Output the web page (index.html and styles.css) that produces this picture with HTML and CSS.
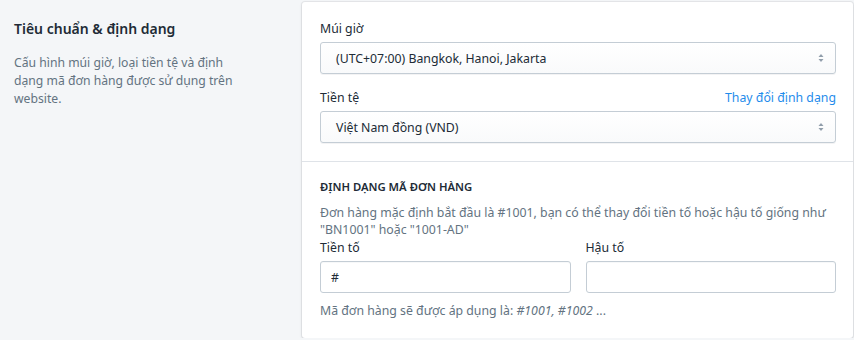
FILE: index.html
```html
<!DOCTYPE html>
<html lang="vi">

<head>
    <meta charset="UTF-8">
    <meta name="viewport" content="width=device-width, initial-scale=1.0">
    <title>Tiêu chuẩn & định dạng</title>
    <link rel="stylesheet" href="styles.css">
</head>

<body>

    <div class="layout">
        <!-- Mô tả bên trái -->
        <div class="annotation">
            <h2 class="annotation-title">Tiêu chuẩn &amp; định dạng</h2>
            <p class="annotation-text">Cấu hình múi giờ, loại tiền tệ và định dạng mã đơn hàng được sử dụng trên website.</p>
        </div>

        <!-- Card -->
        <div class="card">
            <div class="card-section">
                <div class="field">
                    <div class="field-label">
                        <label>Múi giờ</label>
                    </div>
                    <div class="select">
                        <span>(UTC+07:00) Bangkok, Hanoi, Jakarta</span>
                        <svg class="select-arrows" width="8" height="12" viewBox="0 0 8 12">
                            <path d="M4 2 L6.5 5 H1.5 Z" fill="#919eab" />
                            <path d="M4 10 L6.5 7 H1.5 Z" fill="#919eab" />
                        </svg>
                    </div>
                </div>

                <div class="field">
                    <div class="field-label">
                        <label>Tiền tệ</label>
                        <a href="#" class="link">Thay đổi định dạng</a>
                    </div>
                    <div class="select">
                        <span>Việt Nam đồng (VND)</span>
                        <svg class="select-arrows" width="8" height="12" viewBox="0 0 8 12">
                            <path d="M4 2 L6.5 5 H1.5 Z" fill="#919eab" />
                            <path d="M4 10 L6.5 7 H1.5 Z" fill="#919eab" />
                        </svg>
                    </div>
                </div>
            </div>

            <div class="card-section section-bottom">
                <h3 class="subheading">ĐỊNH DẠNG MÃ ĐƠN HÀNG</h3>
                <p class="help">Đơn hàng mặc định bắt đầu là #1001, bạn có thể thay đổi tiền tố hoặc hậu tố giống như "BN1001" hoặc "1001-AD"</p>

                <div class="field-group">
                    <div class="field">
                        <div class="field-label"><label>Tiền tố</label></div>
                        <input type="text" class="input" value="#">
                    </div>
                    <div class="field">
                        <div class="field-label"><label>Hậu tố</label></div>
                        <input type="text" class="input" value="">
                    </div>
                </div>

                <p class="preview">Mã đơn hàng sẽ được áp dụng là: <em>#1001, #1002</em> ...</p>
            </div>
        </div>
    </div>

</body>

</html>
```

FILE: styles.css
```css
/* Style général */
body {
    margin: 0;
    font-family: "Noto Sans", "Open Sans", sans-serif;
    font-size: 12.3px;
    color: #212b36;
    background-color: #f4f6f8;
}

.layout {
    display: flex;
    align-items: flex-start;
    padding-top: 2px;
}

/* Colonne gauche */
.annotation {
    width: 302px;
    padding: 17px 0 0 14px;
    box-sizing: border-box;
    flex-shrink: 0;
}

.annotation-title {
    margin: 0;
    font-size: 14px;
    font-weight: 600;
    line-height: 20px;
}

.annotation-text {
    margin: 15px 0 0;
    width: 230px;
    font-size: 12.2px;
    line-height: 18px;
    color: #637381;
}

/* Card */
.card {
    width: 551px;
    height: 336px;
    box-sizing: border-box;
    background-color: white;
    border-radius: 3px;
    box-shadow: 0 0 0 1px rgba(63, 63, 68, 0.07), 0 1px 3px 0 rgba(63, 63, 68, 0.15);
}

.card-section {
    padding: 19px 17px 18px 18px;
}

.section-bottom {
    border-top: 1px solid #dfe3e8;
    padding-top: 17px;
}

.field + .field {
    margin-top: 16px;
}

.field-label {
    display: flex;
    justify-content: space-between;
    line-height: 16px;
    margin-bottom: 5px;
}

.link {
    color: #1f8ceb;
    text-decoration: none;
}

/* Select */
.select {
    height: 32px;
    box-sizing: border-box;
    border: 1px solid #c4cdd5;
    border-radius: 3px;
    background: linear-gradient(to bottom, #ffffff, #f9fafb);
    box-shadow: 0 1px 0 0 rgba(22, 29, 37, 0.05);
    display: flex;
    align-items: center;
    justify-content: space-between;
    padding: 0 10px 0 15px;
}

.select-arrows {
    display: block;
}

/* Section du bas */
.subheading {
    margin: 0;
    font-size: 11.3px;
    font-weight: 600;
    line-height: 16px;
}

.help {
    margin: 9px 0 2px;
    line-height: 17px;
    color: #637381;
}

.field-group {
    display: flex;
    gap: 15px;
}

.field-group .field {
    flex: 1;
    margin-top: 0;
}

.input {
    display: block;
    width: 100%;
    height: 32px;
    box-sizing: border-box;
    border: 1px solid #c4cdd5;
    border-radius: 3px;
    box-shadow: inset 0 1px 0 0 rgba(99, 115, 129, 0.05);
    padding: 0 10px;
    font-family: inherit;
    font-size: 12.3px;
    color: #212b36;
}

.preview {
    margin: 10px 0 0;
    line-height: 16px;
    color: #637381;
}
```
